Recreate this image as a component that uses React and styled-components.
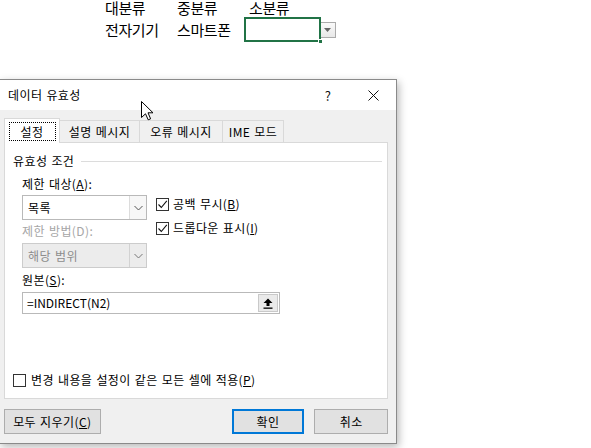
import React from "react";
import styled, { createGlobalStyle } from "styled-components";

const FONT = '"Noto Sans CJK KR", "Noto Sans", sans-serif';

const Global = createGlobalStyle`
  html, body { margin: 0; padding: 0; background: #fff; }
  body { font-family: ${FONT}; }
  * { box-sizing: border-box; }
`;

const Page = styled.div`
  position: relative;
  width: 591px;
  height: 448px;
  overflow: hidden;
  background: #fff;
  font-family: ${FONT};
`;

/* ---------- spreadsheet ---------- */
const Sheet = styled.div`
  height: 79px;
  padding-left: 100px;
  display: flex;
  flex-direction: column;
`;

const SheetRow = styled.div`
  display: grid;
  grid-template-columns: 72px 72px 77px 16px;
  height: ${(p) => p.$h}px;
  margin-top: ${(p) => p.$mt || 0}px;
  align-items: center;
  flex: none;
`;

const Cell = styled.div`
  padding-left: 5px;
  font-size: 15px;
  line-height: 15px;
  letter-spacing: -0.4px;
  color: #000;
  white-space: nowrap;
`;

const SelectedCell = styled.div`
  position: relative;
  height: 25px;
  margin: -1px 0;
  border: 2px solid #217346;
  background: #fff;
`;

const FillHandle = styled.span`
  position: absolute;
  right: -4px;
  bottom: -4px;
  width: 5px;
  height: 5px;
  background: #217346;
  border: 1px solid #fff;
`;

const CellDrop = styled.div`
  margin-left: -2px;
  width: 17px;
  height: 16px;
  border: 1px solid #ababab;
  background: linear-gradient(#fafafa, #e8e8e8);
  display: flex;
  align-items: center;
  justify-content: center;
`;

/* ---------- dialog ---------- */
const Dialog = styled.div`
  width: 398px;
  height: 365px;
  margin-left: -1px;
  border: 1px solid #8a8a8a;
  background: #f0f0f0;
  box-shadow: 2px 3px 8px rgba(0, 0, 0, 0.28);
  display: flex;
  flex-direction: column;
  font-size: 12px;
  letter-spacing: 0.4px;
  word-spacing: 1px;
  color: #000;
`;

const TitleBar = styled.div`
  height: 30px;
  background: #fff;
  display: flex;
  align-items: center;
  padding-left: 8px;
`;

const Title = styled.div`
  font-size: 12px;
  line-height: 16px;
  flex: 1;
`;

const TitleButton = styled.div`
  width: ${(p) => p.$w}px;
  height: 30px;
  display: flex;
  align-items: center;
  justify-content: center;
  font-size: 13px;
  color: #111;
`;

const Body = styled.div`
  flex: 1;
  padding: 8px 0 9px 4px;
  display: flex;
  flex-direction: column;
`;

const TabRow = styled.div`
  height: 24px;
  display: flex;
  align-items: flex-end;
`;

const Tab = styled.div`
  position: relative;
  width: ${(p) => p.$w}px;
  height: ${(p) => (p.$active ? 25 : 22)}px;
  margin-left: ${(p) => (p.$first ? 0 : -1)}px;
  margin-bottom: ${(p) => (p.$active ? -1 : 0)}px;
  border: 1px solid #d9d9d9;
  border-bottom: none;
  background: ${(p) => (p.$active ? "#fff" : "#f0f0f0")};
  z-index: ${(p) => (p.$active ? 2 : 0)};
  display: flex;
  align-items: center;
  justify-content: center;
  font-size: 12px;
  line-height: 16px;
  white-space: nowrap;
`;

const FocusRect = styled.span`
  display: flex;
  align-items: center;
  justify-content: center;
  width: 47px;
  height: 19px;
  margin-top: 1px;
  border: 1px dotted #000;
`;

const Panel = styled.div`
  position: relative;
  z-index: 1;
  width: 384px;
  height: 257px;
  border: 1px solid #d9d9d9;
  background: #fff;
  padding: 10px 5px 10px 8px;
  display: flex;
  flex-direction: column;
`;

const GroupHeader = styled.div`
  display: flex;
  align-items: center;
  height: 16px;
  gap: 7px;
  font-size: 12px;
  line-height: 16px;
  white-space: nowrap;
  &::after {
    content: "";
    flex: 1;
    height: 1px;
    background: #dcdcdc;
    margin-top: 1px;
  }
`;

const Group = styled.div`
  padding-left: 9px;
  margin-top: 7px;
  display: flex;
  flex-direction: column;
`;

const Columns = styled.div`
  display: flex;
  gap: 9px;
`;

const LeftCol = styled.div`
  width: 125px;
  display: flex;
  flex-direction: column;
`;

const RightCol = styled.div`
  padding-top: 20px;
  display: flex;
  flex-direction: column;
  gap: 8px;
`;

const Label = styled.div`
  height: 16px;
  line-height: 16px;
  font-size: 12px;
  margin-top: ${(p) => p.$mt || 0}px;
  color: ${(p) => (p.$disabled ? "#a6a6a6" : "#000")};
  white-space: nowrap;
`;

const U = styled.span`
  text-decoration: underline;
  text-underline-offset: 1px;
`;

const Combo = styled.div`
  height: 25px;
  margin-top: ${(p) => p.$mt || 0}px;
  border: 1px solid ${(p) => (p.$disabled ? "#cccccc" : "#b9b9b9")};
  background: ${(p) => (p.$disabled ? "#ececec" : "#fff")};
  display: flex;
`;

const ComboText = styled.div`
  flex: 1;
  padding-left: 5px;
  display: flex;
  align-items: center;
  font-size: 12px;
  color: ${(p) => (p.$disabled ? "#8d8d8d" : "#000")};
`;

const ComboButton = styled.div`
  width: 17px;
  border-left: 1px solid ${(p) => (p.$disabled ? "#d2d2d2" : "#dcdcdc")};
  background: ${(p) => (p.$disabled ? "#ececec" : "#f7f7f7")};
  display: flex;
  align-items: center;
  justify-content: center;
`;

const CheckRow = styled.label`
  display: flex;
  align-items: center;
  gap: ${(p) => p.$gap || 4}px;
  height: 16px;
  font-size: 12px;
  line-height: 16px;
  white-space: nowrap;
`;

const Box = styled.span`
  width: 13px;
  height: 13px;
  border: 1px solid #333;
  background: #fff;
  display: flex;
  align-items: center;
  justify-content: center;
  flex: none;
`;

const SourceInput = styled.div`
  width: 258px;
  height: 22px;
  margin-top: 4px;
  border: 1px solid #b9b9b9;
  background: #fff;
  display: flex;
  align-items: center;
  padding: 0 1px 0 4px;
`;

const SourceText = styled.div`
  flex: 1;
  font-size: 12px;
  line-height: 16px;
  letter-spacing: 0;
`;

const RefButton = styled.div`
  width: 20px;
  height: 18px;
  border: 1px solid #c9c9c9;
  background: #eaeaea;
  display: flex;
  align-items: center;
  justify-content: center;
`;

const BottomCheck = styled.div`
  margin-top: auto;
`;

const ButtonRow = styled.div`
  margin-top: 10px;
  display: flex;
  align-items: center;
  padding-right: 8px;
`;

const Button = styled.div`
  width: ${(p) => p.$w}px;
  height: 25px;
  margin-left: ${(p) => p.$ml || 0}px;
  border: ${(p) => (p.$primary ? "2px solid #0078d7" : "1px solid #adadad")};
  background: #e1e1e1;
  display: flex;
  align-items: center;
  justify-content: center;
  font-size: 12px;
  line-height: 16px;
  white-space: nowrap;
`;

const Cursor = styled.svg`
  position: absolute;
  left: 141px;
  top: 101px;
  z-index: 5;
`;

/* ---------- icons ---------- */
const Chevron = ({ color = "#555" }) => (
  <svg width="9" height="6" viewBox="0 0 9 6">
    <path d="M0.5 1 L4.5 5 L8.5 1" fill="none" stroke={color} strokeWidth="1" />
  </svg>
);

const Check = () => (
  <svg width="11" height="11" viewBox="0 0 11 11">
    <path d="M1.5 5.5 L4.3 8.5 L9.8 1.8" fill="none" stroke="#111" strokeWidth="1.1" />
  </svg>
);

const CheckBox = ({ checked, gap, children }) => (
  <CheckRow $gap={gap}>
    <Box>{checked && <Check />}</Box>
    <span>{children}</span>
  </CheckRow>
);

export default function App() {
  return (
    <Page>
      <Global />
      <Sheet>
        <SheetRow $h={21} $mt={-3}>
          <Cell>대분류</Cell>
          <Cell>중분류</Cell>
          <Cell>소분류</Cell>
        </SheetRow>
        <SheetRow $h={23}>
          <Cell>전자기기</Cell>
          <Cell>스마트폰</Cell>
          <SelectedCell>
            <FillHandle />
          </SelectedCell>
          <CellDrop>
            <svg width="7" height="4" viewBox="0 0 7 4">
              <path d="M0 0 H7 L3.5 4 Z" fill="#666" />
            </svg>
          </CellDrop>
        </SheetRow>
      </Sheet>

      <Dialog>
        <TitleBar>
          <Title>데이터 유효성</Title>
          <TitleButton $w={46}>?</TitleButton>
          <TitleButton $w={45}>
            <svg width="11" height="11" viewBox="0 0 11 11">
              <path d="M0.5 0.5 L10.5 10.5 M10.5 0.5 L0.5 10.5" stroke="#111" strokeWidth="1" />
            </svg>
          </TitleButton>
        </TitleBar>

        <Body>
          <TabRow>
            <Tab $w={56} $active $first>
              <FocusRect>설정</FocusRect>
            </Tab>
            <Tab $w={81}>설명 메시지</Tab>
            <Tab $w={84}>오류 메시지</Tab>
            <Tab $w={62}>IME 모드</Tab>
          </TabRow>

          <Panel>
            <GroupHeader>유효성 조건</GroupHeader>
            <Group>
              <Columns>
                <LeftCol>
                  <Label>
                    제한 대상(<U>A</U>):
                  </Label>
                  <Combo $mt={3}>
                    <ComboText>목록</ComboText>
                    <ComboButton>
                      <Chevron />
                    </ComboButton>
                  </Combo>
                  <Label $mt={3} $disabled>
                    제한 방법(D):
                  </Label>
                  <Combo $mt={4} $disabled>
                    <ComboText $disabled>해당 범위</ComboText>
                    <ComboButton $disabled>
                      <Chevron color="#777" />
                    </ComboButton>
                  </Combo>
                </LeftCol>
                <RightCol>
                  <CheckBox checked>
                    공백 무시(<U>B</U>)
                  </CheckBox>
                  <CheckBox checked>
                    드롭다운 표시(<U>I</U>)
                  </CheckBox>
                </RightCol>
              </Columns>
              <Label $mt={4}>
                원본(<U>S</U>):
              </Label>
              <SourceInput>
                <SourceText>=INDIRECT(N2)</SourceText>
                <RefButton>
                  <svg width="10" height="11" viewBox="0 0 10 11">
                    <path d="M5 0.5 L9.5 5 H6.5 V8 H3.5 V5 H0.5 Z" fill="#000" />
                    <rect x="0.5" y="9.5" width="9" height="1.3" fill="#000" />
                  </svg>
                </RefButton>
              </SourceInput>
            </Group>
            <BottomCheck>
              <CheckBox gap={5}>
                변경 내용을 설정이 같은 모든 셀에 적용(<U>P</U>)
              </CheckBox>
            </BottomCheck>
          </Panel>

          <ButtonRow>
            <Button $w={97}>
              모두 지우기(<U>C</U>)
            </Button>
            <Button $w={73} $ml={131} $primary>
              확인
            </Button>
            <Button $w={74} $ml={10}>
              취소
            </Button>
          </ButtonRow>
        </Body>
      </Dialog>

      <Cursor width="13" height="20" viewBox="0 0 13 20">
        <path
          d="M0.5 0.5 L0.5 16.5 L4.5 12.8 L7.2 18.8 L9.6 17.8 L7 11.8 L12 11.8 Z"
          fill="#fff"
          stroke="#000"
          strokeWidth="1"
          strokeLinejoin="round"
        />
      </Cursor>
    </Page>
  );
}
